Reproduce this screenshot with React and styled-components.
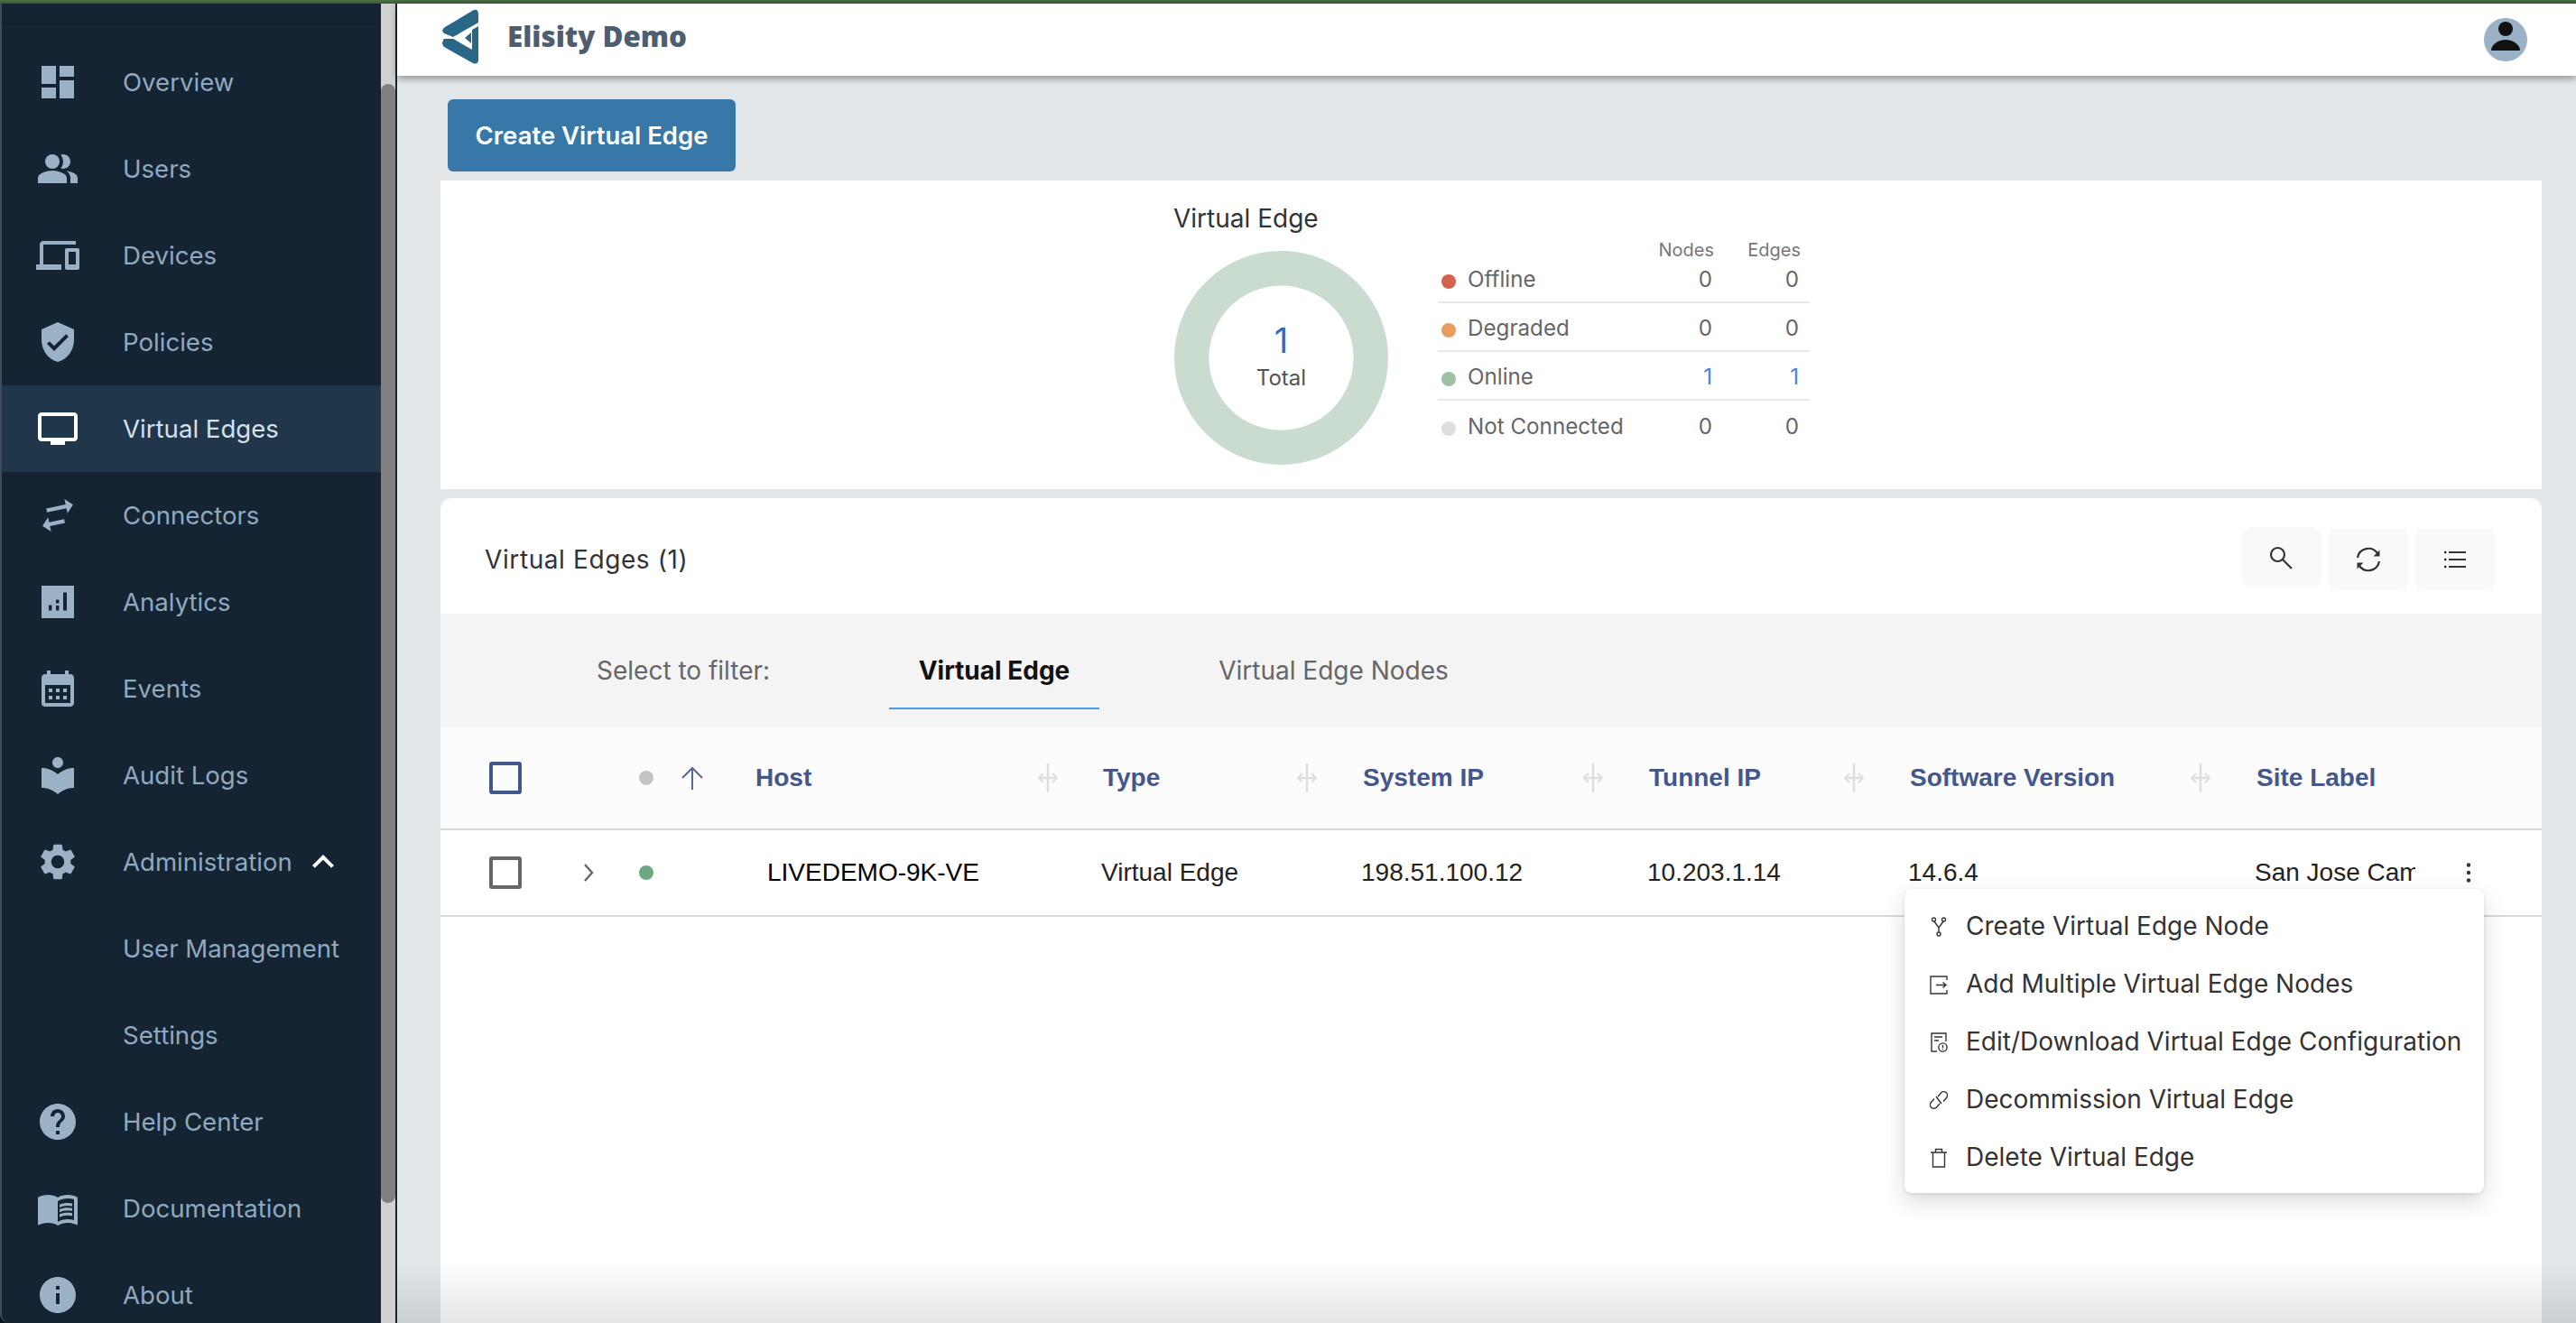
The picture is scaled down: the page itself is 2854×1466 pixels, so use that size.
import React from "react";
import styled, { createGlobalStyle, css } from "styled-components";
import {
  MdDashboard, MdPeopleAlt, MdDevices, MdVerifiedUser, MdTv, MdCalendarMonth,
  MdLocalLibrary, MdSettings, MdHelp, MdMenuBook, MdInfo, MdExpandLess,
} from "react-icons/md";

const Global = createGlobalStyle`
  html, body { margin: 0; padding: 0; background: #0c141b; }
  * { box-sizing: border-box; }
  body { font-family: Inter, "Liberation Sans", sans-serif; }
`;

const Page = styled.div`
  width: 2854px; height: 1466px; overflow: hidden;
  display: flex; flex-direction: column;
`;
const TopStrip = styled.div`
  height: 4px; flex: none;
  background: linear-gradient(#4f7345, #38593a);
`;
const Body = styled.div`
  flex: 1; min-height: 0; display: flex;
`;
const Sidebar = styled.nav`
  width: 422px; flex: none; overflow: hidden;
  background: #152432; border-left: 2px solid #3f4d57;
  border-bottom-left-radius: 10px;
  display: flex; flex-direction: column;
`;
const SidebarTop = styled.div`
  height: 23px; flex: none; border-bottom: 1px solid #111e29; margin-bottom: 16px;
`;
const NavItem = styled.div`
  height: 96px; flex: none; display: flex; align-items: center;
  padding-left: 38px;
  font-size: 27.6px;
  color: ${p => (p.$active ? "#d5e0ea" : "#8fa9bf")};
  background: ${p => (p.$active ? "#20364a" : "transparent")};
`;
const NavIcon = styled.span`
  width: 48px; height: 48px; flex: none; margin-right: 48px; font-size: 48px;
  display: flex; align-items: center; justify-content: center;
  color: ${p => (p.$active ? "#ffffff" : "#9bb2c6")};
`;
const NavSpacer = styled.span`
  width: 96px; flex: none;
`;
const ExpandIcon = styled(MdExpandLess)`
  color: #fff; font-size: 48px; margin-left: 10px; flex: none;
`;
const ScrollTrack = styled.div`
  width: 16px; flex: none; background: #d1d1d1; padding-top: 89px;
`;
const ScrollThumb = styled.div`
  height: 1240px; background: #808080; border-radius: 8px;
`;
const Main = styled.main`
  flex: 1; min-width: 0; position: relative;
  background: #e3e7ea; border-left: 2px solid #152432;
  display: flex; flex-direction: column;
`;
const Header = styled.header`
  height: 80px; flex: none; background: #fff;
  box-shadow: 0 3px 8px rgba(0, 0, 0, 0.38);
  display: flex; align-items: center; padding: 0 54px 0 44px;
  position: relative; z-index: 2;
`;
const Logo = styled.svg`
  width: 60px; height: 72px; margin-top: -4px; flex: none;
`;
const Brand = styled.span`
  margin-left: 18px; margin-top: -8px; flex: 1;
  font-family: "Open Sans", sans-serif; font-weight: 800; font-size: 31.3px;
  color: #4f5d70;
`;
const Avatar = styled.div`
  width: 48px; height: 48px; border-radius: 50%; background: #9bb2c6;
  display: flex; align-items: center; justify-content: center;
`;
const Content = styled.div`
  flex: 1; min-height: 0; padding: 26px 38px 0 48px;
  display: flex; flex-direction: column;
`;
const CreateButton = styled.button`
  width: 319px; height: 80px; margin-left: 8px; flex: none;
  border: none; border-radius: 6px; background: #3878a8; color: #fff;
  font: 600 27.5px Inter, sans-serif; padding: 0;
`;
const StatsCard = styled.section`
  height: 342px; flex: none; margin-top: 10px; background: #fff;
  display: flex; justify-content: center; gap: 54px;
`;
const DonutColumn = styled.div`
  width: 240px; flex: none; padding: 24px 0 0 2px;
`;
const DonutTitle = styled.div`
  height: 36px; line-height: 36px; font-size: 28px; color: #333;
  margin-left: -1px; white-space: nowrap;
`;
const DonutWrap = styled.div`
  position: relative; width: 237px; height: 237px; margin-top: 18px;
`;
const DonutSvg = styled.svg`
  display: block; width: 237px; height: 237px;
`;
const DonutCenter = styled.div`
  position: absolute; inset: 0; display: flex; flex-direction: column; align-items: center;
  padding-top: 76px;
`;
const DonutNumber = styled.div`
  font-size: 38px; line-height: 46px; color: #2b6cc4;
`;
const DonutLabel = styled.div`
  font-size: 24px; line-height: 30px; margin-top: 4px; color: #555;
`;
const Legend = styled.div`
  width: 412px; flex: none; padding-top: 62px;
`;
const LegendHead = styled.div`
  height: 20px; line-height: 30px; padding-right: 10px;
  display: grid; grid-template-columns: 1fr 96px 96px; text-align: right;
  font-size: 20px; color: #777;
`;
const LegendRow = styled.div`
  height: 54px; padding: 2px 12px 0 0;
  display: grid; grid-template-columns: 1fr 96px 96px; align-items: center; text-align: right;
  font-size: 24.2px; color: #666;
  border-bottom: ${p => (p.$last ? "none" : "2px solid #e8e8e8")};
`;
const LegendName = styled.div`
  display: flex; align-items: center; text-align: left; padding-left: 4px; white-space: nowrap;
`;
const LegendDot = styled.span`
  width: 16px; height: 16px; border-radius: 50%; margin: 6px 13px 0 0; flex: none;
  background: ${p => p.$color};
`;
const LegendValue = styled.span`
  color: ${p => (p.$on ? "#3b8be8" : "#666")};
`;
const ListCard = styled.section`
  flex: 1; min-height: 0; margin-top: 10px; background: #fff;
  border-radius: 12px 12px 0 0; display: flex; flex-direction: column;
`;
const ListHead = styled.div`
  height: 128px; flex: none; padding: 8px 52px 0 49px;
  display: flex; align-items: center; gap: 8px;
`;
const ListTitle = styled.h2`
  margin: 0 auto 0 0; font-size: 28px; font-weight: 400; letter-spacing: 0.6px; color: #333;
`;
const ToolButton = styled.button`
  width: 88px; height: 68px; border: none; border-radius: 10px; background: #fafafa;
  padding: 0; display: flex; align-items: center; justify-content: center;
  margin-top: ${p => (p.$raised ? "-4px" : "0")};
`;
const FilterBar = styled.div`
  height: 126px; flex: none; background: #f4f4f4; border-top: 2px solid #f1f4f9;
  display: flex; padding-left: 173px; font-size: 28px; color: #666;
`;
const FilterLabel = styled.span`
  width: 324px; flex: none; line-height: 122px;
`;
const FilterTab = styled.div`
  height: 104px; padding-top: 44px; line-height: 34px; flex: none; text-align: center;
  width: ${p => (p.$active ? "233px" : "321px")};
  margin-right: 99px;
  color: ${p => (p.$active ? "#111" : "#666")};
  font-weight: ${p => (p.$active ? 700 : 400)};
  border-bottom: 2px solid ${p => (p.$active ? "#4a9fdc" : "transparent")};
`;
const tableColumns = css`
  display: grid;
  grid-template-columns: 140px 68px 54px 470px 288px 317px 289px 384px 178px 140px;
  align-items: center;
  font-family: "Liberation Sans", Arial, sans-serif;
  font-size: 28px;
`;
const TableHead = styled.div`
  ${tableColumns}
  height: 114px; flex: none; background: #fcfcfc; border-bottom: 2px solid #d8d8d8;
  color: #44578c; font-weight: 700;
`;
const TableRow = styled.div`
  ${tableColumns}
  height: 96px; flex: none; position: relative; border-bottom: 2px solid #d8d8d8;
  color: #222;
`;
const CheckCell = styled.div`
  padding-left: 54px; display: flex;
`;
const CheckBox = styled.span`
  width: 36px; height: 36px; border-radius: 3px;
  border: 4px solid ${p => p.$color};
`;
const ChevronCell = styled.div`
  padding-left: 12px; display: flex; color: #666;
`;
const DotCell = styled.div`
  padding-left: 12px; display: flex;
`;
const StatusDot = styled.span`
  width: 16px; height: 16px; border-radius: 50%; background: ${p => p.$color};
`;
const HostHead = styled.div`
  padding-left: 5px; padding-right: 47px; display: flex; align-items: center;
`;
const HostLabel = styled.span`
  margin-left: 58px; margin-right: auto;
`;
const HeadCell = styled.div`
  padding: 0 48px 0 2px; display: flex; align-items: center; justify-content: space-between;
  white-space: nowrap;
`;
const HostValue = styled.div`
  padding-left: 100px; color: #000;
`;
const ValueCell = styled.div`
  white-space: nowrap; overflow: hidden;
`;
const KebabCell = styled.div`
  padding-left: 55px; display: flex;
`;
const Menu = styled.div`
  position: absolute; top: 65px; right: 64px; z-index: 5;
  width: 642px; padding: 9px 0 8px; background: #fff; border-radius: 8px;
  box-shadow: 0 10px 26px rgba(0, 0, 0, 0.14), 0 1px 4px rgba(0, 0, 0, 0.1);
  font-family: Inter, sans-serif; color: #333;
`;
const MenuItem = styled.div`
  height: 64px; padding-left: 28px; display: flex; align-items: center; gap: 20px;
  font-size: 28px; white-space: nowrap;
`;
const MenuIcon = styled.svg`
  width: 20px; height: 22px; flex: none; margin-top: 1px;
  fill: none; stroke: #333; stroke-width: 1.4;
`;
const BottomFade = styled.div`
  position: absolute; left: 0; right: 0; bottom: 0; height: 70px; pointer-events: none; z-index: 6;
  background: linear-gradient(rgba(0, 0, 0, 0), rgba(0, 0, 0, 0.1));
`;

const AnalyticsIcon = () => (
  <svg width="1em" height="1em" viewBox="0 0 24 24" fill="currentColor">
    <path fillRule="evenodd" d="M3 3h18v18H3z M7 13.8h1.7v2.9H7z M11 14h1.7v2.7H11z M11 10.7h1.7v2H11z M15 6.7h2v10h-2z" />
  </svg>
);
const ConnectorsIcon = () => (
  <svg width="1em" height="1em" viewBox="0 0 24 24" fill="currentColor">
    <path transform="rotate(-12 12 12)" d="M21.5 8l-4-4v3H6.5v2.2h11v2.8l4-4zM2.5 16l4 4v-3h8.5v-2.2H6.5v-2.8l-4 4z" />
  </svg>
);

const navItems = [
  [MdDashboard, "Overview"], [MdPeopleAlt, "Users"], [MdDevices, "Devices"], [MdVerifiedUser, "Policies"],
  [MdTv, "Virtual Edges", true], [ConnectorsIcon, "Connectors"], [AnalyticsIcon, "Analytics"], [MdCalendarMonth, "Events"],
  [MdLocalLibrary, "Audit Logs"],
];
const navTail = [[MdHelp, "Help Center"], [MdMenuBook, "Documentation"], [MdInfo, "About"]];

const Nav = ({ icon: Icon, label, active }) => (
  <NavItem $active={active}>
    <NavIcon $active={active}><Icon /></NavIcon>
    {label}
  </NavItem>
);

const ResizeHandle = () => (
  <svg width="24" height="32" viewBox="0 0 24 32" fill="none" stroke="#dedede" strokeWidth="3">
    <path d="M12 0v32M2 16h20" strokeWidth="2.5" />
    <path d="M7 11l-5 5 5 5M17 11l5 5-5 5" strokeWidth="2" />
  </svg>
);

const legend = [
  ["Offline", "#d6604f", 0, 0],
  ["Degraded", "#e89d5e", 0, 0],
  ["Online", "#9fc0a7", 1, 1],
  ["Not Connected", "#dedede", 0, 0],
];

const columns = ["Type", "System IP", "Tunnel IP", "Software Version"];

export default function App() {
  return (
    <>
      <Global />
      <Page>
        <TopStrip />
        <Body>
          <Sidebar>
            <SidebarTop />
            {navItems.map(([icon, label, active]) => (
              <Nav key={label} icon={icon} label={label} active={active} />
            ))}
            <NavItem>
              <NavIcon><MdSettings /></NavIcon>
              Administration
              <ExpandIcon />
            </NavItem>
            <NavItem><NavSpacer />User Management</NavItem>
            <NavItem><NavSpacer />Settings</NavItem>
            {navTail.map(([icon, label]) => (
              <Nav key={label} icon={icon} label={label} />
            ))}
          </Sidebar>
          <ScrollTrack><ScrollThumb /></ScrollTrack>
          <Main>
            <Header>
              <Logo viewBox="0 0 60 72" fill="#2a6685">
                <path d="M41 5Q46 4 46 10L46 19L18 35L8 31Q4 27 9 24Z" />
                <path d="M8 37L18 37L39 49L39 27L46 23L46 60Q46 66 40 64L8 46Q4 42 8 37Z" />
                <path d="M31 36L38 30L38 42Z" />
              </Logo>
              <Brand>Elisity Demo</Brand>
              <Avatar>
                <svg width="32" height="40" viewBox="0 0 32 40" fill="#111">
                  <circle cx="16" cy="8" r="8" />
                  <path d="M0 32C0 25 8 20 16 20S32 25 32 32v0H0Z" />
                </svg>
              </Avatar>
            </Header>
            <Content>
              <CreateButton>Create Virtual Edge</CreateButton>
              <StatsCard>
                <DonutColumn>
                  <DonutTitle>Virtual Edge</DonutTitle>
                  <DonutWrap>
                    <DonutSvg viewBox="0 0 237 237">
                      <circle cx="118.5" cy="118.5" r="99.3" fill="none" stroke="#c9dccf" strokeWidth="38.4" />
                    </DonutSvg>
                    <DonutCenter>
                      <DonutNumber>1</DonutNumber>
                      <DonutLabel>Total</DonutLabel>
                    </DonutCenter>
                  </DonutWrap>
                </DonutColumn>
                <Legend>
                  <LegendHead><span /><span>Nodes</span><span>Edges</span></LegendHead>
                  {legend.map(([name, color, nodes, edges], i) => (
                    <LegendRow key={name} $last={i === legend.length - 1}>
                      <LegendName><LegendDot $color={color} />{name}</LegendName>
                      <LegendValue $on={nodes > 0}>{nodes}</LegendValue>
                      <LegendValue $on={edges > 0}>{edges}</LegendValue>
                    </LegendRow>
                  ))}
                </Legend>
              </StatsCard>
              <ListCard>
                <ListHead>
                  <ListTitle>Virtual Edges (1)</ListTitle>
                  <ToolButton $raised>
                    <svg width="28" height="28" viewBox="0 0 28 28" fill="none" stroke="#333" strokeWidth="2.2">
                      <circle cx="9.5" cy="10.5" r="7.5" />
                      <path d="M15 16l10 10" />
                    </svg>
                  </ToolButton>
                  <ToolButton>
                    <svg width="30" height="30" viewBox="0 0 30 30" fill="none" stroke="#333" strokeWidth="2.2">
                      <path d="M3 13A12.2 12.2 0 0 1 25 8" />
                      <path d="M27 17A12.2 12.2 0 0 1 5 22" />
                      <path d="M27.5 4.5v7h-7z" fill="#333" stroke="none" />
                      <path d="M2.5 25.5v-7h7z" fill="#333" stroke="none" />
                    </svg>
                  </ToolButton>
                  <ToolButton>
                    <svg width="26" height="22" viewBox="0 0 26 22" fill="none" stroke="#333" strokeWidth="2">
                      <path d="M6 3h19M6 11h19M6 19h19" />
                      <path d="M1 3h2.4M1 11h2.4M1 19h2.4" strokeWidth="2.4" />
                    </svg>
                  </ToolButton>
                </ListHead>
                <FilterBar>
                  <FilterLabel>Select to filter:</FilterLabel>
                  <FilterTab $active>Virtual Edge</FilterTab>
                  <FilterTab>Virtual Edge Nodes</FilterTab>
                </FilterBar>
                <TableHead>
                  <CheckCell><CheckBox $color="#43578f" /></CheckCell>
                  <span />
                  <DotCell><StatusDot $color="#c4c4c4" /></DotCell>
                  <HostHead>
                    <svg width="24" height="26" viewBox="0 0 24 26" fill="none" stroke="#56689a" strokeWidth="2">
                      <path d="M12 26V2M1 13L12 2l11 11" />
                    </svg>
                    <HostLabel>Host</HostLabel>
                    <ResizeHandle />
                  </HostHead>
                  {columns.map(c => (
                    <HeadCell key={c}><span>{c}</span><ResizeHandle /></HeadCell>
                  ))}
                  <HeadCell>Site Label</HeadCell>
                </TableHead>
                <TableRow>
                  <CheckCell><CheckBox $color="#666" /></CheckCell>
                  <ChevronCell>
                    <svg width="24" height="24" viewBox="0 0 24 24" fill="none" stroke="currentColor" strokeWidth="2.4">
                      <path d="M8 3l8 9-8 9" />
                    </svg>
                  </ChevronCell>
                  <DotCell><StatusDot $color="#6ba87f" /></DotCell>
                  <HostValue>LIVEDEMO-9K-VE</HostValue>
                  <ValueCell>Virtual Edge</ValueCell>
                  <ValueCell>198.51.100.12</ValueCell>
                  <ValueCell>10.203.1.14</ValueCell>
                  <ValueCell>14.6.4</ValueCell>
                  <ValueCell>San Jose Campus</ValueCell>
                  <KebabCell>
                    <svg width="8" height="24" viewBox="0 0 8 24" fill="#333">
                      <circle cx="4" cy="3.5" r="2.2" /><circle cx="4" cy="12" r="2.2" /><circle cx="4" cy="20.5" r="2.2" />
                    </svg>
                  </KebabCell>
                  <Menu>
                    <MenuItem>
                      <MenuIcon viewBox="0 0 20 22">
                        <circle cx="4.5" cy="3" r="2" /><circle cx="15.5" cy="3" r="2" /><circle cx="10" cy="19" r="2" />
                        <path d="M5 5l5 7 5-7M10 12v5" />
                      </MenuIcon>
                      Create Virtual Edge Node
                    </MenuItem>
                    <MenuItem>
                      <MenuIcon viewBox="0 0 20 22">
                        <path d="M19 6V2H1v19h18v-4" /><path d="M7 11.5h11M14.5 8.5l3.5 3-3.5 3" />
                      </MenuIcon>
                      Add Multiple Virtual Edge Nodes
                    </MenuItem>
                    <MenuItem>
                      <MenuIcon viewBox="0 0 20 22">
                        <path d="M18 10V1H2v20h6" /><path d="M5 5h9M5 9h5" />
                        <circle cx="14.5" cy="16.5" r="4.6" /><path d="M14.5 14v3M14.5 18v1" />
                      </MenuIcon>
                      Edit/Download Virtual Edge Configuration
                    </MenuItem>
                    <MenuItem>
                      <MenuIcon viewBox="0 0 20 22">
                        <path d="M9 7l3.5-4a4 4 0 0 1 6 5.5L15 12.5" />
                        <path d="M11 15l-3.5 4a4 4 0 0 1-6-5.5L5 9.5" />
                        <path d="M7 7l6 8" />
                      </MenuIcon>
                      Decommission Virtual Edge
                    </MenuItem>
                    <MenuItem>
                      <MenuIcon viewBox="0 0 20 22">
                        <path d="M1 5h18M6.5 5V1.5h7V5M3.5 5v16h13V5" />
                      </MenuIcon>
                      Delete Virtual Edge
                    </MenuItem>
                  </Menu>
                </TableRow>
              </ListCard>
            </Content>
            <BottomFade />
          </Main>
        </Body>
      </Page>
    </>
  );
}
